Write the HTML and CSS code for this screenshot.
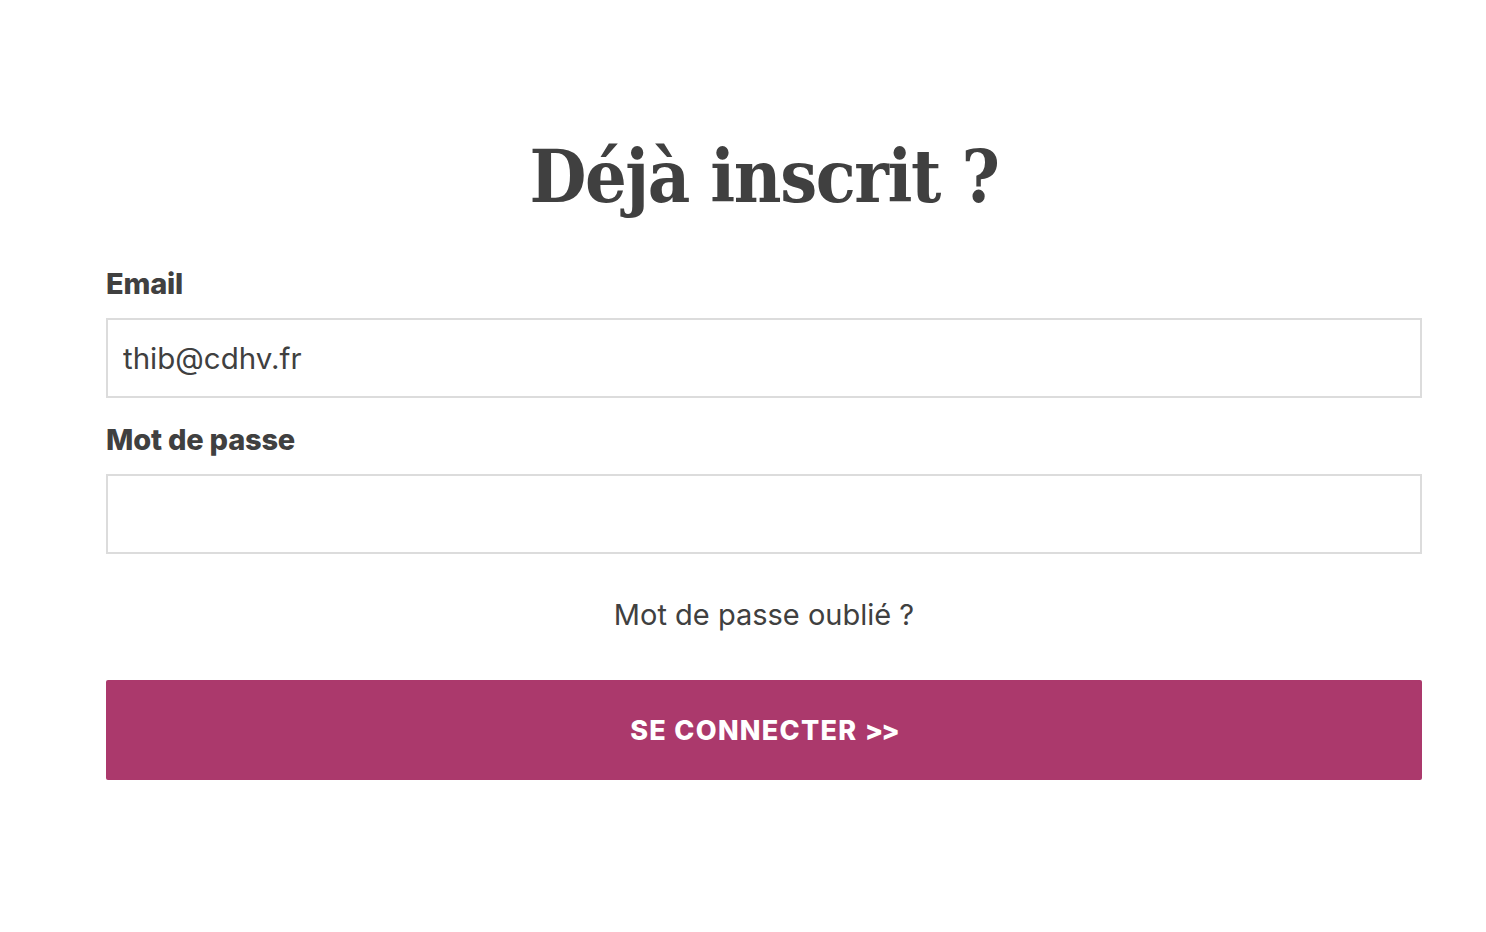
FILE: index.html
```html
<!DOCTYPE html>
<html lang="fr">
<head>
<meta charset="utf-8">
<title>Déjà inscrit ?</title>
<link rel="stylesheet" href="styles.css">
</head>
<body>
<main class="page">
  <section class="login">
    <h1 class="title">Déjà inscrit ?</h1>
    <form class="form">
      <label class="label" for="email">Email</label>
      <input class="input" id="email" type="email" value="thib@cdhv.fr">
      <label class="label" for="pwd">Mot de passe</label>
      <input class="input" id="pwd" type="password">
      <a class="forgot" href="#">Mot de passe oublié ?</a>
      <button class="btn" type="button">SE CONNECTER <span class="chev">&gt;&gt;</span></button>
    </form>
  </section>
  <section class="signup">
    <h2 class="title title-2">Inscription</h2>
  </section>
</main>
</body>
</html>
```
FILE: styles.css
```css
* { box-sizing: border-box; }
html, body { margin: 0; padding: 0; background: #fff; }
body { overflow: hidden; height: 932px; color: #404040; font-family: "Inter", "Liberation Sans", sans-serif; }
.page { padding: 0 64px 0 106px; }
.login { display: flex; flex-direction: column; }
.title {
  margin: 128px 0 0;
  text-align: center;
  font-family: "DejaVu Serif Condensed", "DejaVu Serif", "Liberation Serif", serif;
  font-stretch: condensed;
  font-weight: 700;
  font-size: 73px;
  line-height: 96px;
  color: #404040;
  letter-spacing: -1.4px;
}
.form { display: flex; flex-direction: column; margin-top: 43px; }
.label {
  font-size: 29px;
  font-weight: 800;
  line-height: 34px;
  color: #404040;
  margin-bottom: 17px;
  letter-spacing: -0.2px;
}
.input {
  height: 80px;
  border: 2px solid #dcdcdc;
  border-radius: 0;
  padding: 0 15px;
  font-family: "Inter", "Liberation Sans", sans-serif;
  font-size: 29.5px;
  color: #404040;
  margin-bottom: 25px;
  outline: none;
}
.forgot {
  align-self: center;
  margin-top: 16px;
  font-size: 29px;
  line-height: 40px;
  color: #404040;
  text-decoration: none;
}
.btn {
  margin-top: 45px;
  height: 100px;
  border: none;
  border-radius: 2px;
  background: #ab396c;
  color: #fff;
  font-family: "Inter", "Liberation Sans", sans-serif;
  font-weight: 800;
  font-size: 27px;
  letter-spacing: 1.3px;
}
.chev { letter-spacing: -2px; }
.title-2 { margin-top: 146px; }
```
